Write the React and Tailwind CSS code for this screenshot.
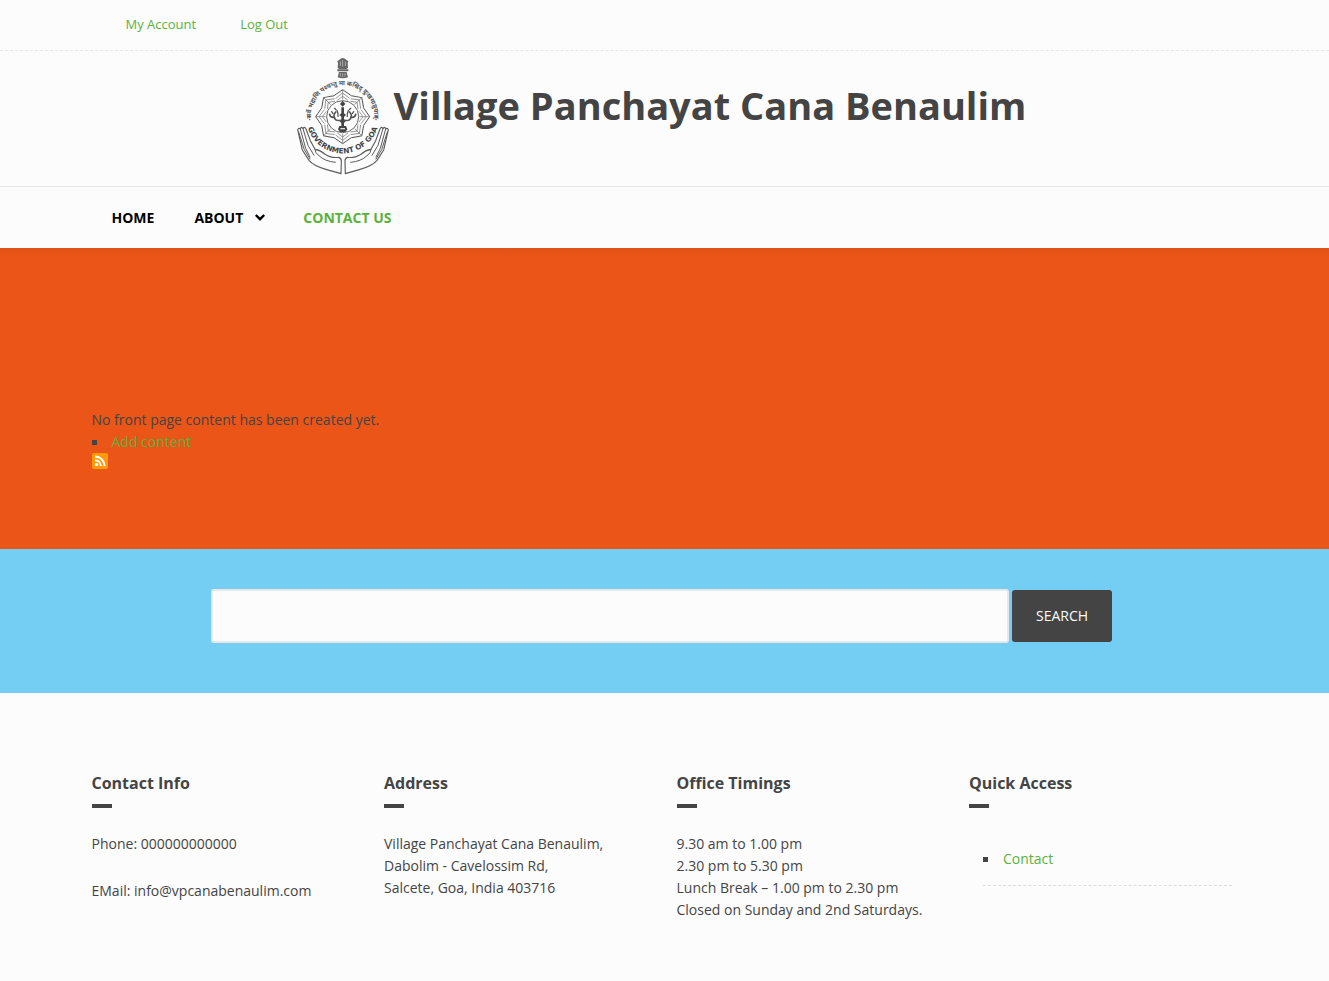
const topLinks = ["My Account", "Log Out"];
const RAYS = [0, 45, 90, 135, 180, 225, 270, 315];

function Emblem() {
  return (
    <svg viewBox="15 15 288 360" className="h-[120px] w-[96px] shrink-0" role="img" aria-label="Government of Goa">
      <defs>
        <path id="arc-bottom" d="M48 200 A110 110 0 0 0 268 200" />
        <path id="arc-top" d="M64 214 A95 95 0 1 1 252 214" />
      </defs>
      {/* lion capital */}
      <g fill="#666">
        <path d="M148 29 Q158 19 169 29 L175 34 L173 40 L174 54 L169 57 H148 L143 54 L144 40 L142 34 Z" />
        <path d="M142 58 H175 V64 H142 Z M147 66 H170 L174 82 Q158 88 143 82 Z" />
      </g>
      <path d="M151 34 V48 M158 30 V50 M166 34 V48 M151 69 V80 M158 69 V81 M165 69 V80" stroke="#ccc" strokeWidth="2" />
      {/* star */}
      <g fill="none" stroke="#777" strokeWidth="3">
        {RAYS.map((a) => (
          <g key={a} transform={"rotate(" + a + " 158 200)"}>
            <path d="M132 137 L158 119 L184 137" stroke="#555" />
            <path d="M137 145 L158 129 L179 145 M142 151 L158 139 L174 151" strokeWidth="2.2" />
            <path d="M158 119 V149" strokeWidth="2.2" />
          </g>
        ))}
        <circle cx="158" cy="200" r="48" stroke="#666" />
      </g>
      {/* lamp with side branches */}
      <g fill="#444">
        <path d="M158 152 L166 162 L158 170 L150 162 Z" />
        <path d="M154 172 H162 V190 L168 195 L162 200 V208 L167 214 L162 219 V228 H154 V219 L149 214 L154 208 V200 L148 195 L154 190 Z" />
        <path d="M148 228 H168 L172 238 L166 246 H150 L144 238 Z" />
      </g>
      <g fill="none" stroke="#555" strokeWidth="5" strokeLinecap="round">
        <path d="M153 211 Q136 214 133 202 Q130 193 137 186 M163 211 Q180 214 183 202 Q186 193 179 186" />
        <path d="M133 202 Q121 204 119 193 M183 202 Q195 204 197 193" />
        <path d="M144 199 Q145 190 141 182 M172 199 Q171 190 175 182" strokeWidth="4" />
        <path d="M125 185 L129 191 M191 185 L187 191 M134 175 L138 179 M182 175 L178 179" strokeWidth="4" />
      </g>
      <path d="M151 236 H165" stroke="#ddd" strokeWidth="4" />
      {/* mottoes */}
      <text fontFamily="'Noto Sans Devanagari','Noto Sans',FreeSans,sans-serif" fontSize="19" fontWeight="700" fill="#555" textAnchor="middle">
        <textPath href="#arc-top" startOffset="50%">सर्वे भद्राणि पश्यन्तु मा कश्चिद् दुःखमाप्नुयात्</textPath>
      </text>
      <text fontFamily="'DejaVu Sans',sans-serif" fontSize="22" fontWeight="700" fill="#444" textAnchor="middle">
        <textPath href="#arc-bottom" startOffset="50%">GOVERNMENT OF GOA</textPath>
      </text>
      <path d="M53 199 H63 M57 209 H61 M254 199 H264 M256 209 H260" stroke="#555" strokeWidth="3" />
      {/* hands */}
      <g fill="none" stroke="#5c5c5c" strokeWidth="3.4" strokeLinejoin="round" strokeLinecap="round">
        <path d="M23 239 Q27 232 31 237 Q34 228 39 236 Q43 228 48 237 L61 272 L75 298 Q91 300 104 312 Q122 325 146 322 Q154 324 154 334 L153 371 L110 359 Q70 347 57 331 L37 300 Z" />
        <path d="M31 237 L47 295 L60 321 M39 236 L54 286 L72 316 M26 246 L43 299 L60 327 M75 298 Q74 309 87 317 Q104 334 136 337" strokeWidth="3" />
        <path d="M295 239 Q291 232 287 237 Q284 228 279 236 Q275 228 270 237 L257 272 L243 298 Q227 300 214 312 Q196 325 172 322 Q165 324 165 334 L166 371 L208 359 Q248 347 261 331 L281 300 Z" />
        <path d="M287 237 L271 295 L258 321 M279 236 L264 286 L246 316 M292 246 L275 299 L258 327 M243 298 Q244 309 231 317 Q214 334 182 337" strokeWidth="3" />
      </g>
    </svg>
  );
}

function FeedIcon() {
  return (
    <svg viewBox="0 0 16 16" className="size-4">
      <rect width="16" height="16" rx="2" fill="#ff9a0a" />
      <circle cx="4.5" cy="11.5" r="1.6" fill="#fff" />
      <path d="M3 7.2 A5.8 5.8 0 0 1 8.8 13 M3 3.5 A9.5 9.5 0 0 1 12.5 13" fill="none" stroke="#fff" strokeWidth="1.9" />
    </svg>
  );
}

function Column({ title, children }) {
  return (
    <section className="px-3">
      <h2 className="text-base leading-5 font-bold">{title}</h2>
      <div className="mt-[11px] mb-[25px] h-1 w-5 bg-[#444]" />
      {children}
    </section>
  );
}

export default function App() {
  return (
    <div className="min-h-screen bg-[#fcfcfc] font-['Open_Sans',sans-serif] text-sm leading-[22px] text-[#444]">
      <div className="border-b border-dashed border-[#e7e7e7]">
        <ul className="mx-auto flex h-[50px] max-w-[1170px] items-center gap-11 px-[46px] pb-[2px] text-[13px] text-[#5bb23b]">
          {topLinks.map((label) => (
            <li key={label}><a href="#">{label}</a></li>
          ))}
        </ul>
      </div>

      <header className="flex justify-center border-b border-[#e7e7e7] pt-1 pb-[11px]">
        <Emblem />
        <h1 className="mt-6 ml-[3px] pr-2 text-[38px] leading-[52px] font-bold">Village Panchayat Cana Benaulim</h1>
      </header>

      <nav className="mx-auto flex h-[61px] max-w-[1170px] items-center gap-10 px-8 font-bold text-black">
        <a href="#">HOME</a>
        <a href="#" className="flex items-center gap-3">
          ABOUT
          <svg viewBox="0 0 8 8" className="size-2 overflow-visible" fill="none" stroke="currentColor" strokeWidth="2.4">
            <path d="M0.8 1 L5 5.2 L9.2 1" />
          </svg>
        </a>
        <a href="#" className="text-[#5bb23b]">CONTACT US</a>
      </nav>

      <main className="bg-[#eb5517] bg-linear-to-b from-[#e05217] to-[#eb5517] to-[8px] pt-[161px] pb-20">
        <div className="mx-auto max-w-[1170px] px-3">
          <p>No front page content has been created yet.</p>
          <ul>
            <li className="flex items-center gap-[15px]">
              <span className="size-[5px] bg-[#444]" />
              <a href="#" className="text-[#5bb23b]">Add content</a>
            </li>
          </ul>
          <a href="#" aria-label="Subscribe to feed" className="block w-4"><FeedIcon /></a>
        </div>
      </main>

      <section className="bg-[#74cdf2] pt-10 pb-[50px]">
        <form className="mx-auto flex max-w-[907px] items-center gap-[3px] pr-[6px]" onSubmit={(e) => e.preventDefault()}>
          <input type="search" aria-label="Search" className="h-[54px] min-w-0 flex-1 rounded-[3px] border-2 border-[#e7e7e7] bg-[#fcfcfc] px-4 outline-none" />
          <button type="submit" className="h-[52px] w-[100px] rounded-[3px] bg-[#444] text-[#fcfcfc]">SEARCH</button>
        </form>
      </section>

      <footer className="mx-auto grid max-w-[1170px] grid-cols-4 pt-20 pb-[60px]">
        <Column title="Contact Info">
          <p>Phone: 000000000000</p>
          <p className="mt-[25px]">EMail: info@vpcanabenaulim.com</p>
        </Column>
        <Column title="Address">
          <p>Village Panchayat Cana Benaulim,<br />Dabolim - Cavelossim Rd,<br />Salcete, Goa, India 403716</p>
        </Column>
        <Column title="Office Timings">
          <p className="whitespace-nowrap">9.30 am to 1.00 pm<br />2.30 pm to 5.30 pm<br />Lunch Break – 1.00 pm to 2.30 pm<br />Closed on Sunday and 2nd Saturdays.</p>
        </Column>
        <Column title="Quick Access">
          <ul className="mr-[6px] ml-[14px]">
            <li className="flex items-center gap-[15px] border-b border-dashed border-[#ddd] py-[15px]">
              <span className="size-[5px] bg-[#444]" />
              <a href="#" className="text-[#5bb23b]">Contact</a>
            </li>
          </ul>
        </Column>
      </footer>
    </div>
  );
}
